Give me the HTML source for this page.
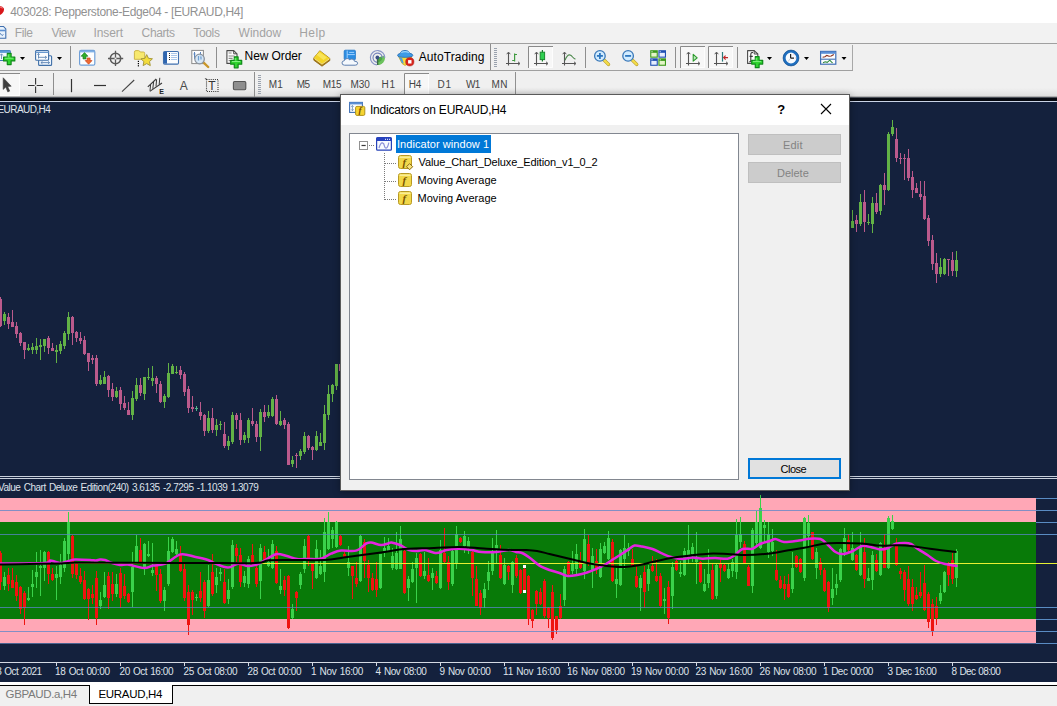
<!DOCTYPE html>
<html><head><meta charset="utf-8"><title>MT4</title><style>
html,body{margin:0;padding:0}
body{width:1057px;height:706px;overflow:hidden;position:relative;background:#f0f0f0;font-family:'Liberation Sans', sans-serif;}
.a{position:absolute}
.t{position:absolute;white-space:pre;}
svg{position:absolute;overflow:visible}
</style></head>
<body>
<div class="a" style="left:0px;top:0px;width:1057px;height:23px;background:#ffffff;"></div>
<div class="a" style="left:0px;top:23px;width:1057px;height:20px;background:#f2f2f2;"></div>
<div class="a" style="left:0px;top:43px;width:1057px;height:1px;background:#a0a0a0;"></div>
<div class="a" style="left:0px;top:44px;width:1057px;height:26px;background:#f0f0f0;"></div>
<div class="a" style="left:0px;top:70px;width:853px;height:1px;background:#a0a0a0;"></div>
<div class="a" style="left:0px;top:71px;width:1057px;height:27px;background:#f0f0f0;"></div>
<div class="a" style="left:0px;top:88px;width:1057px;height:9px;background:linear-gradient(#f0f0f0,#dcdcdc);"></div>
<div class="a" style="left:0px;top:96px;width:1057px;height:1px;background:#b0b0b0;"></div>
<div class="a" style="left:0px;top:97px;width:1057px;height:1px;background:#4a4f58;"></div>
<svg width="1057" height="100" style="left:0;top:0"><path d="M-3 6.2Q2.2 5 3.8 8.2Q4.6 11 2.4 13.2Q.6 15 -2 15.6Z" fill="#d8161a"/><path d="M-1 7.2Q1.6 6.6 2.6 8.4" stroke="#f08a8a" stroke-width="1.2" fill="none" opacity=".8"/><path d="M-2 26.5H3.5L5.8 29V38.3H-2Z" fill="#e8f2fc" stroke="#3f6fae" stroke-width="1.1"/><path d="M-1 30.5H5.5" stroke="#5c8fd0" stroke-width="1.6"/><path d="M-1 35.5l1.5-2 1.5 2 1.5-1" stroke="#3f6fae" stroke-width=".8" fill="none"/><rect x="-4" y="50.5" width="14.3" height="10" rx="1" fill="#f4f9ff" stroke="#3f78b4" stroke-width="1.1"/><rect x="-4" y="50.5" width="14.3" height="2.4" fill="#5c9ad8"/><path d="M1.5 54v5M0 55.5l1.5-1.7 1.5 1.7" stroke="#6d8fb5" stroke-width=".9" fill="none"/><path d="M7.30 53.40L11.10 53.40L11.10 57.10L14.80 57.10L14.80 60.90L11.10 60.90L11.10 64.60L7.30 64.60L7.30 60.90L3.60 60.90L3.60 57.10L7.30 57.10Z" fill="#2fd42f" stroke="#0f8a1a" stroke-width="1.2" stroke-linejoin="round"/><path d="M8.20 54.60V57.10M4.80 58.20H13.30" stroke="#8af58a" stroke-width="0.9" fill="none"/><path d="M20 57h5l-2.5 3z" fill="#000"/><rect x="38.6" y="55.8" width="13" height="9.6" rx="1" fill="#eef5fd" stroke="#3f6fa8" stroke-width="1.1"/><rect x="35.6" y="50.5" width="13" height="9.8" rx="1" fill="#fbfdff" stroke="#3f6fa8" stroke-width="1.1"/><path d="M35.6 52.3h13" stroke="#6a9ad0" stroke-width="1.4"/><path d="M38.5 53.5v5M37.3 54.7l1.2-1.3 1.2 1.3M38 57.3h8.5M45 56l1.6 1.3-1.6 1.3" stroke="#5f86b4" stroke-width=".9" fill="none"/><path d="M41 62.6h8.5M42.5 61.4l-1.6 1.2 1.6 1.2M48 61.4l1.6 1.2-1.6 1.2" stroke="#5f86b4" stroke-width=".9" fill="none"/><path d="M57 57h5l-2.5 3z" fill="#000"/><rect x="70" y="46" width="1" height="22" fill="#8e8e8e" shape-rendering="crispEdges"/><rect x="79.6" y="50.4" width="15.2" height="14.8" rx="1.5" fill="#fdfeff" stroke="#6f9fd8" stroke-width="1.2"/><path d="M80 51.6h14.4" stroke="#7fb0e6" stroke-width="1.6"/><path d="M84.5 52.6l3.4 3.6h-1.9v2.7h-3v-2.7h-1.9z" fill="#2fae2a" stroke="#1c7d1c" stroke-width=".7"/><path d="M88.6 64.2l-3.4-3.6h1.9v-2.6h3v2.6h1.9z" fill="#f06a30" stroke="#c8401a" stroke-width=".7"/><circle cx="115.5" cy="58.5" r="5.2" fill="none" stroke="#5a5a5a" stroke-width="1.5"/><path d="M115.5 50.8V66M108 58.5H123.2" stroke="#5a5a5a" stroke-width="1.3"/><circle cx="115.5" cy="58.5" r="1" fill="#f0f0f0"/><path d="M134.4 59.3V52.2q0-1.6 1.6-1.6h2.4q1.2 0 1.8 1.4h3.2q1.3 0 1.3 1.3V59.3z" fill="#f7e96e" stroke="#cdb64a" stroke-width="1"/><path d="M146.7 54.6l1.75 3.7 4 .5-2.95 2.8.8 4-3.6-2-3.6 2 .8-4-2.95-2.8 4-.5z" fill="#f3dc3c" stroke="#a89a3c" stroke-width="1" stroke-linejoin="round"/><rect x="137.8" y="60.8" width="1.2" height="1.2"/><rect x="137.8" y="63" width="1.2" height="1.2"/><rect x="137.8" y="65.2" width="1.2" height="1.2"/><rect x="163.5" y="51.5" width="15" height="12.6" rx="1.2" fill="#fdfeff" stroke="#3f6fae" stroke-width="1.1"/><rect x="164" y="52" width="3" height="11.6" fill="#2f66b0"/><rect x="169" y="53" width="1" height="1" fill="#222" shape-rendering="crispEdges"/><rect x="171" y="53" width="6" height="1" fill="#a9c6ea" shape-rendering="crispEdges"/><rect x="169" y="55" width="1" height="1" fill="#222" shape-rendering="crispEdges"/><rect x="171" y="55" width="6" height="1" fill="#a9c6ea" shape-rendering="crispEdges"/><rect x="169" y="57" width="1" height="1" fill="#222" shape-rendering="crispEdges"/><rect x="171" y="57" width="6" height="1" fill="#a9c6ea" shape-rendering="crispEdges"/><rect x="169" y="59" width="1" height="1" fill="#222" shape-rendering="crispEdges"/><rect x="171" y="59" width="6" height="1" fill="#a9c6ea" shape-rendering="crispEdges"/><rect x="191.8" y="50.4" width="11.6" height="13.2" fill="#fdfdfd" stroke="#8a8a8a" stroke-width="1"/><path d="M194.5 52v7M200.5 52v6M193.5 54h2M199.5 55h2.5" stroke="#5a86c0" stroke-width="1"/><path d="M203.6 62.6l4.6 4.4" stroke="#c9962a" stroke-width="2.4" stroke-linecap="round"/><circle cx="199.6" cy="59" r="4.8" fill="#cfe3f6" fill-opacity=".85" stroke="#8c949e" stroke-width="1.2"/><path d="M198.5 56v4.5M201 56.5v3" stroke="#6f9fd0" stroke-width="1.2"/><rect x="216" y="47" width="1" height="21" fill="#8e8e8e" shape-rendering="crispEdges"/><path d="M226.9 50.6h6.8l3.3 3.2v9.6h-10.1z" fill="#fdfdfd" stroke="#4a4a4a" stroke-width="1.1" stroke-linejoin="round"/><path d="M233.7 50.6v3.2h3.3" fill="none" stroke="#4a4a4a" stroke-width="1"/><path d="M228.6 53h3M228.6 56h6M228.6 58.4h4M228.6 60.6h3" stroke="#8a8a8a" stroke-width="1.1"/><path d="M234.30 56.80L238.10 56.80L238.10 60.40L241.70 60.40L241.70 64.20L238.10 64.20L238.10 67.80L234.30 67.80L234.30 64.20L230.70 64.20L230.70 60.40L234.30 60.40Z" fill="#2fd42f" stroke="#0f8a1a" stroke-width="1.2" stroke-linejoin="round"/><path d="M235.20 58.00V60.40M231.90 61.50H240.20" stroke="#8af58a" stroke-width="0.9" fill="none"/><path d="M319.8 50.8L329.8 58.4V60.6L322 66.2L313.8 60.2V58z" fill="#a87c14" stroke="#8a6410" stroke-width=".8" stroke-linejoin="round"/><path d="M319.8 50.8L329.8 58.4L322 64L313.8 58z" fill="#f3d428"/><path d="M319.6 52.2L326.8 57.6L323.6 60L316.4 54.8z" fill="#fbea6a" opacity=".75"/><path d="M314.4 58.6L322 64.2L329.4 58.9" stroke="#fff3a0" stroke-width=".8" fill="none"/><rect x="344.2" y="50.2" width="11.2" height="9.6" rx="1" fill="#2b8de2" stroke="#1c74c8" stroke-width=".8"/><path d="M347.2 50.6v8.6M347.2 54.6h7.6M349.2 52.4h5" stroke="#9fd0ff" stroke-width="1"/><path d="M344.6 65.2q-2.6 0-2.6-2.3 0-2 2.3-2.2.6-2.2 2.9-2.2 1.7 0 2.5 1.4.9-.9 2.2-.9 2.2 0 2.5 2.2 3.2-.1 3.2 2 0 2-2.4 2z" fill="#f4f8fd" stroke="#5e7fae" stroke-width="1"/><path d="M377.6 57.7L384.7 55.6A7.4 7.4 0 0 1 377.2 65.1Z" fill="#6cc25e"/><path d="M377.6 57.7L382 56.4A4.6 4.6 0 0 1 377.3 62.3Z" fill="#4ea646"/><circle cx="377.6" cy="57.7" r="7.2" fill="none" stroke="#8a96c8" stroke-width="1.2" stroke-dasharray="33 12.3" transform="rotate(95 377.6 57.7)"/><circle cx="377.6" cy="57.7" r="4.6" fill="none" stroke="#7684bc" stroke-width="1.2" stroke-dasharray="21 8" transform="rotate(95 377.6 57.7)"/><path d="M377.5 57.7l.2 7.2" stroke="#3f6a4a" stroke-width="1.4"/><circle cx="377.4" cy="57.5" r="1.9" fill="#3a4f86"/><path d="M398.6 56.6h13l-2 6.4-4.6 2.4-3-2z" fill="#f7dc3c" stroke="#caa422" stroke-width=".8" stroke-linejoin="round"/><path d="M398.8 56.8l3.4 1.4 1.6 5.6-2-1z" fill="#4aa0e0"/><path d="M397.6 55.6q-.2-1.6 2.6-2.2.6-3 4.8-3 3.8 0 4.6 2.8 3.2.6 3.2 2.2 0 1.9-7.6 1.9t-7.6-1.7z" fill="#3d9be6" stroke="#2a6fb6" stroke-width=".9"/><path d="M401.2 52.6q3.6-1.8 7.8-.2" stroke="#9ad6ff" stroke-width="1.1" fill="none"/><circle cx="409.8" cy="61.8" r="4.1" fill="#d8241c" stroke="#b01810" stroke-width=".6"/><rect x="408.1" y="60.1" width="3.4" height="3.4" fill="#fff"/><rect x="490" y="44" width="1" height="26" fill="#8e8e8e" shape-rendering="crispEdges"/><rect x="494" y="48" width="3" height="1" fill="#9aa2ae" shape-rendering="crispEdges"/><rect x="494" y="50" width="3" height="1" fill="#9aa2ae" shape-rendering="crispEdges"/><rect x="494" y="52" width="3" height="1" fill="#9aa2ae" shape-rendering="crispEdges"/><rect x="494" y="54" width="3" height="1" fill="#9aa2ae" shape-rendering="crispEdges"/><rect x="494" y="56" width="3" height="1" fill="#9aa2ae" shape-rendering="crispEdges"/><rect x="494" y="58" width="3" height="1" fill="#9aa2ae" shape-rendering="crispEdges"/><rect x="494" y="60" width="3" height="1" fill="#9aa2ae" shape-rendering="crispEdges"/><rect x="494" y="62" width="3" height="1" fill="#9aa2ae" shape-rendering="crispEdges"/><rect x="494" y="64" width="3" height="1" fill="#9aa2ae" shape-rendering="crispEdges"/><rect x="494" y="66" width="3" height="1" fill="#9aa2ae" shape-rendering="crispEdges"/><path d="M508.5 52.4V65.5M506.0 63.5H519.5" stroke="#555" stroke-width="1.1" fill="none"/><path d="M506.7 54.199999999999996L508.5 52.1L510.3 54.199999999999996M518.0 61.8L520.0 63.5L518.0 65.2" stroke="#555" stroke-width="1" fill="none"/><path d="M514.6 53.6V61.4M514.6 54.5H517M512.2 60.5H514.6" stroke="#3f9a3f" stroke-width="1.2" fill="none"/><rect x="528" y="46" width="25" height="22" fill="#f7f7f7"/><path d="M528.5 68V46.5H553" stroke="#8a8a8a" stroke-width="1" fill="none"/><path d="M552.5 47V67.5H529" stroke="#fdfdfd" stroke-width="1" fill="none"/><path d="M536.5 52.4V65.5M534.0 63.5H547.5" stroke="#555" stroke-width="1.1" fill="none"/><path d="M534.7 54.199999999999996L536.5 52.1L538.3 54.199999999999996M546.0 61.8L548.0 63.5L546.0 65.2" stroke="#555" stroke-width="1" fill="none"/><path d="M542.4 50v11.6" stroke="#1c7d2c" stroke-width="1.2"/><rect x="540.2" y="52.2" width="4.4" height="7.4" fill="#2fd050" stroke="#1c8a30" stroke-width="1"/><path d="M564.5 52.4V65.5M562.0 63.5H575.5" stroke="#555" stroke-width="1.1" fill="none"/><path d="M562.7 54.199999999999996L564.5 52.1L566.3 54.199999999999996M574.0 61.8L576.0 63.5L574.0 65.2" stroke="#555" stroke-width="1" fill="none"/><path d="M565 60.2q2.2-5.6 4.6-5.4 1.6.2 3 2.2 1.4 1.8 2.8 2.2" stroke="#4f8a4f" stroke-width="1.2" fill="none"/><rect x="585" y="47" width="1" height="21" fill="#8e8e8e" shape-rendering="crispEdges"/><path d="M603.9 59.9l4.6 4.5" stroke="#b09428" stroke-width="3.4" stroke-linecap="round"/><path d="M603.9 59.9l4.6 4.5" stroke="#f2dc4a" stroke-width="2.2" stroke-linecap="round"/><circle cx="599.9" cy="55.9" r="5.3" fill="#d2ecff" stroke="#3a78b8" stroke-width="1.3"/><path d="M596.9 55.9h6" stroke="#2f78c0" stroke-width="1.8"/><path d="M599.9 52.9v6" stroke="#2f78c0" stroke-width="1.8"/><path d="M632.1 59.9l4.6 4.5" stroke="#b09428" stroke-width="3.4" stroke-linecap="round"/><path d="M632.1 59.9l4.6 4.5" stroke="#f2dc4a" stroke-width="2.2" stroke-linecap="round"/><circle cx="628.1" cy="55.9" r="5.3" fill="#d2ecff" stroke="#3a78b8" stroke-width="1.3"/><path d="M625.1 55.9h6" stroke="#2f78c0" stroke-width="1.8"/><rect x="650.2" y="50.2" width="7.6" height="7.5" fill="#3c9a1c"/><rect x="651.3000000000001" y="52.800000000000004" width="5.4" height="3.8" fill="#e4f5c8"/><rect x="651.4000000000001" y="51.2" width="1.2" height="1" fill="#fff" opacity=".8"/><rect x="658.4" y="50.2" width="7.6" height="7.5" fill="#1f50b4"/><rect x="659.5" y="52.800000000000004" width="5.4" height="3.8" fill="#e6eeff"/><rect x="659.6" y="51.2" width="1.2" height="1" fill="#fff" opacity=".8"/><rect x="650.2" y="58.3" width="7.6" height="7.5" fill="#1f50b4"/><rect x="651.3000000000001" y="60.9" width="5.4" height="3.8" fill="#e6eeff"/><rect x="651.4000000000001" y="59.3" width="1.2" height="1" fill="#fff" opacity=".8"/><rect x="658.4" y="58.3" width="7.6" height="7.5" fill="#3c9a1c"/><rect x="659.5" y="60.9" width="5.4" height="3.8" fill="#e4f5c8"/><rect x="659.6" y="59.3" width="1.2" height="1" fill="#fff" opacity=".8"/><rect x="675" y="47" width="1" height="21" fill="#8e8e8e" shape-rendering="crispEdges"/><rect x="680" y="46" width="25" height="22" fill="#f7f7f7"/><path d="M680.5 68V46.5H705" stroke="#8a8a8a" stroke-width="1" fill="none"/><path d="M704.5 47V67.5H681" stroke="#fdfdfd" stroke-width="1" fill="none"/><path d="M688.5 52.4V65.5M686.0 63.5H699.5" stroke="#555" stroke-width="1.1" fill="none"/><path d="M686.7 54.199999999999996L688.5 52.1L690.3 54.199999999999996M698.0 61.8L700.0 63.5L698.0 65.2" stroke="#555" stroke-width="1" fill="none"/><path d="M693.2 54.4v6.8l4-3.4z" fill="#bfe8bf" stroke="#2a9a2a" stroke-width="1.1" stroke-linejoin="round"/><rect x="708" y="46" width="25" height="22" fill="#f7f7f7"/><path d="M708.5 68V46.5H733" stroke="#8a8a8a" stroke-width="1" fill="none"/><path d="M732.5 47V67.5H709" stroke="#fdfdfd" stroke-width="1" fill="none"/><path d="M716.5 52.4V65.5M714.0 63.5H727.5" stroke="#555" stroke-width="1.1" fill="none"/><path d="M714.7 54.199999999999996L716.5 52.1L718.3 54.199999999999996M726.0 61.8L728.0 63.5L726.0 65.2" stroke="#555" stroke-width="1" fill="none"/><path d="M722.5 52v9.6" stroke="#2a7a7a" stroke-width="1.2"/><path d="M728 57.6h-4M725.6 55.6l-2 2 2 2" stroke="#c02828" stroke-width="1.1" fill="none"/><rect x="737" y="47" width="1" height="21" fill="#8e8e8e" shape-rendering="crispEdges"/><path d="M747.6 50.6h6.6l3.6 3.4v9.4h-10.2z" fill="#fdfdfd" stroke="#4a4a4a" stroke-width="1.1" stroke-linejoin="round"/><path d="M754.2 50.6v3.4h3.6" fill="none" stroke="#4a4a4a" stroke-width="1"/><path d="M753 52.6q-2-.6-2.2 1.6v6.2q0 1.6-1.6 1.4M749.6 56.4h3.2" stroke="#3a3a3a" stroke-width="1.1" fill="none"/><path d="M755.30 56.70L759.10 56.70L759.10 60.30L762.70 60.30L762.70 64.10L759.10 64.10L759.10 67.70L755.30 67.70L755.30 64.10L751.70 64.10L751.70 60.30L755.30 60.30Z" fill="#2fd42f" stroke="#0f8a1a" stroke-width="1.2" stroke-linejoin="round"/><path d="M756.20 57.90V60.30M752.90 61.40H761.20" stroke="#8af58a" stroke-width="0.9" fill="none"/><path d="M767 57h5l-2.5 3z" fill="#000"/><circle cx="791" cy="58" r="6.7" fill="#f7fbff" stroke="#1f6fc0" stroke-width="2.6"/><circle cx="791" cy="58" r="7.9" fill="none" stroke="#15508e" stroke-width=".7"/><path d="M790.6 54v4.2h3.4" stroke="#222" stroke-width="1.2" fill="none"/><path d="M790.6 58.2l-2.6 3.4" stroke="#c8c8c8" stroke-width=".9"/><path d="M793.4 55.2l1-1M795 58h.8" stroke="#e09a9a" stroke-width=".8"/><path d="M804 57h5l-2.5 3z" fill="#000"/><rect x="820.6" y="51.4" width="15.2" height="12.8" fill="#fdfeff" stroke="#3f6fb4" stroke-width="1.2"/><rect x="821" y="51.6" width="14.4" height="2.2" fill="#5a8fd6"/><path d="M821 59.2h14.4" stroke="#3f6fb4" stroke-width="1.1"/><path d="M822.6 57.2l2.4-.4 1.8-1.4 2.2.8 2.2-.2 2.6-1.4" stroke="#8a2f1c" stroke-width="1.1" fill="none"/><path d="M823 62.8l2.2-1 2 .6 2.6-2.2 2 2.2 1 .4" stroke="#2f8a3c" stroke-width="1.1" fill="none"/><path d="M841.5 57h5l-2.5 3z" fill="#000"/><rect x="852" y="45" width="1" height="25" fill="#a8a8a8" shape-rendering="crispEdges"/><rect x="-1" y="73" width="21" height="23" fill="#f7f7f7"/><path d="M-0.5 96V73.5H20" stroke="#8a8a8a" stroke-width="1" fill="none"/><path d="M19.5 74V95.5H0" stroke="#fdfdfd" stroke-width="1" fill="none"/><path d="M3.2 77.8V89.4l2.6-2.3 2 4.8 1.9-.8-2-4.6 3.5-.3z" fill="#3f3f3f" stroke="#3f3f3f" stroke-width=".6" stroke-linejoin="round"/><path d="M35.6 78V84.5M35.6 86.6V93M28 85.5H34.6M36.7 85.5H43" stroke="#333" stroke-width="1.1"/><rect x="53" y="73" width="1" height="22" fill="#8e8e8e" shape-rendering="crispEdges"/><path d="M71.5 79V92.2" stroke="#333" stroke-width="1.2"/><path d="M94 85.5H106" stroke="#333" stroke-width="1.2"/><path d="M122 91.6L134.2 80" stroke="#444" stroke-width="1.1"/><path d="M147.8 86.8L156.2 79M149.8 91.4L162 83" stroke="#3a3a3a" stroke-width="1.1"/><path d="M150.6 84.4l-.6 6.4M153.6 81.8l-.8 7M156.6 79.4l-.6 7M159.8 77.8l-.6 6.6" stroke="#3a3a3a" stroke-width="1"/><rect x="206.5" y="79.5" width="11.5" height="12" fill="none" stroke="#333" stroke-width="1.1" stroke-dasharray="1 1.1"/><path d="M204.6 78.2l2.2.2-1 1.2z" fill="#333"/><rect x="233.4" y="81.5" width="12.4" height="8.2" rx="1.2" fill="#8f8f8f" stroke="#555" stroke-width="1.1"/><rect x="254" y="72" width="1" height="25" fill="#8e8e8e" shape-rendering="crispEdges"/><rect x="258" y="75" width="3" height="1" fill="#9aa2ae" shape-rendering="crispEdges"/><rect x="258" y="77" width="3" height="1" fill="#9aa2ae" shape-rendering="crispEdges"/><rect x="258" y="79" width="3" height="1" fill="#9aa2ae" shape-rendering="crispEdges"/><rect x="258" y="81" width="3" height="1" fill="#9aa2ae" shape-rendering="crispEdges"/><rect x="258" y="83" width="3" height="1" fill="#9aa2ae" shape-rendering="crispEdges"/><rect x="258" y="85" width="3" height="1" fill="#9aa2ae" shape-rendering="crispEdges"/><rect x="258" y="87" width="3" height="1" fill="#9aa2ae" shape-rendering="crispEdges"/><rect x="258" y="89" width="3" height="1" fill="#9aa2ae" shape-rendering="crispEdges"/><rect x="258" y="91" width="3" height="1" fill="#9aa2ae" shape-rendering="crispEdges"/><rect x="258" y="93" width="3" height="1" fill="#9aa2ae" shape-rendering="crispEdges"/><rect x="404" y="73" width="25" height="23" fill="#f7f7f7"/><path d="M404.5 96V73.5H429" stroke="#8a8a8a" stroke-width="1" fill="none"/><path d="M428.5 74V95.5H405" stroke="#fdfdfd" stroke-width="1" fill="none"/><rect x="515" y="72" width="1" height="25" fill="#909090" shape-rendering="crispEdges"/></svg>
<div class="a" style="left:0px;top:98px;width:1057px;height:3px;background:#05080f;"></div>
<div class="a" style="left:0px;top:101px;width:1057px;height:1px;background:#c9d3e6;"></div>
<div class="a" style="left:0px;top:102px;width:1057px;height:580px;background:#14213d;"></div>
<div class="a" style="left:0px;top:476px;width:1057px;height:1px;background:#c9d0dc;"></div>
<div class="a" style="left:0px;top:478px;width:1057px;height:1px;background:#c9d0dc;"></div>
<svg width="1057" height="706" style="left:0;top:0" shape-rendering="crispEdges"><path fill="#bb5a8c" d="M0 297h1v30h-1zM-1 299h3v27h-3zM8 313h1v16h-1zM7 317h3v7h-3zM12 310h1v17h-1zM11 322h3v5h-3zM16 322h1v16h-1zM15 326h3v8h-3zM20 332h1v14h-1zM19 333h3v10h-3zM24 342h1v17h-1zM23 342h3v8h-3zM48 336h1v18h-1zM47 338h3v10h-3zM52 343h1v8h-1zM51 348h3v3h-3zM72 316h1v29h-1zM71 317h3v16h-3zM76 331h1v11h-1zM75 332h3v6h-3zM80 332h1v12h-1zM79 338h3v3h-3zM84 336h1v19h-1zM83 340h3v14h-3zM88 353h1v18h-1zM87 353h3v9h-3zM92 355h1v9h-1zM91 358h3v2h-3zM96 355h1v31h-1zM95 358h3v26h-3zM108 375h1v22h-1zM107 376h3v14h-3zM112 383h1v18h-1zM111 389h3v8h-3zM120 387h1v23h-1zM119 390h3v14h-3zM124 396h1v14h-1zM123 403h3v5h-3zM128 402h1v13h-1zM127 410h3v5h-3zM140 378h1v18h-1zM139 385h3v8h-3zM156 376h1v17h-1zM155 378h3v6h-3zM160 381h1v22h-1zM159 384h3v18h-3zM180 366h1v13h-1zM179 370h3v5h-3zM184 372h1v24h-1zM183 374h3v18h-3zM188 386h1v27h-1zM187 389h3v19h-3zM192 396h1v16h-1zM191 407h3v2h-3zM200 402h1v18h-1zM199 412h3v4h-3zM204 414h1v22h-1zM203 415h3v16h-3zM212 408h1v25h-1zM211 418h3v12h-3zM224 422h1v26h-1zM223 434h3v12h-3zM236 413h1v16h-1zM235 415h3v5h-3zM240 413h1v32h-1zM239 420h3v20h-3zM252 408h1v18h-1zM251 421h3v3h-3zM256 421h1v21h-1zM255 424h3v13h-3zM264 405h1v17h-1zM263 412h3v5h-3zM276 395h1v30h-1zM275 399h3v25h-3zM284 418h1v11h-1zM283 420h3v5h-3zM288 422h1v43h-1zM287 424h3v41h-3zM296 453h1v15h-1zM295 455h3v1h-3zM308 435h1v15h-1zM307 436h3v12h-3zM312 446h1v14h-1zM311 447h3v3h-3zM340 363h1v9h-1zM339 364h3v7h-3zM856 215h1v17h-1zM855 220h3v4h-3zM864 190h1v42h-1zM863 202h3v20h-3zM876 193h1v21h-1zM875 203h3v9h-3zM884 173h1v32h-1zM883 185h3v5h-3zM896 128h1v34h-1zM895 139h3v19h-3zM900 153h1v11h-1zM899 158h3v1h-3zM904 154h1v26h-1zM903 158h3v1h-3zM908 149h1v32h-1zM907 158h3v20h-3zM912 171h1v27h-1zM911 177h3v13h-3zM916 183h1v10h-1zM915 188h3v5h-3zM920 181h1v19h-1zM919 194h3v3h-3zM924 181h1v39h-1zM923 196h3v23h-3zM928 215h1v31h-1zM927 218h3v23h-3zM932 235h1v35h-1zM931 240h3v24h-3zM936 253h1v30h-1zM935 263h3v11h-3zM948 259h1v17h-1zM947 259h3v1h-3zM952 252h1v24h-1zM951 260h3v11h-3z"/><path fill="#62b246" d="M4 312h1v13h-1zM3 314h3v7h-3zM28 344h1v7h-1zM27 348h3v2h-3zM32 343h1v11h-1zM31 347h3v3h-3zM36 338h1v16h-1zM35 346h3v4h-3zM40 339h1v21h-1zM39 345h3v2h-3zM44 339h1v13h-1zM43 339h3v7h-3zM56 345h1v18h-1zM55 350h3v2h-3zM60 341h1v13h-1zM59 344h3v7h-3zM64 331h1v18h-1zM63 333h3v13h-3zM68 312h1v28h-1zM67 317h3v17h-3zM100 375h1v10h-1zM99 380h3v4h-3zM104 371h1v13h-1zM103 377h3v7h-3zM116 387h1v11h-1zM115 391h3v6h-3zM132 391h1v29h-1zM131 398h3v17h-3zM136 378h1v23h-1zM135 385h3v14h-3zM144 377h1v23h-1zM143 377h3v17h-3zM148 368h1v12h-1zM147 377h3v1h-3zM152 366h1v20h-1zM151 378h3v3h-3zM164 394h1v14h-1zM163 396h3v6h-3zM168 363h1v35h-1zM167 373h3v24h-3zM172 364h1v10h-1zM171 366h3v8h-3zM176 366h1v8h-1zM175 372h3v1h-3zM208 411h1v22h-1zM207 418h3v13h-3zM216 419h1v17h-1zM215 425h3v5h-3zM220 421h1v9h-1zM219 424h3v1h-3zM228 436h1v14h-1zM227 441h3v5h-3zM232 412h1v32h-1zM231 415h3v27h-3zM244 432h1v11h-1zM243 435h3v5h-3zM248 418h1v25h-1zM247 420h3v18h-3zM260 409h1v42h-1zM259 412h3v25h-3zM268 405h1v13h-1zM267 412h3v4h-3zM272 397h1v20h-1zM271 399h3v17h-3zM280 411h1v15h-1zM279 421h3v4h-3zM292 456h1v11h-1zM291 460h3v4h-3zM300 449h1v11h-1zM299 451h3v5h-3zM304 432h1v22h-1zM303 436h3v16h-3zM316 431h1v20h-1zM315 436h3v14h-3zM320 433h1v13h-1zM319 442h3v4h-3zM324 405h1v45h-1zM323 414h3v29h-3zM328 385h1v35h-1zM327 394h3v21h-3zM332 384h1v18h-1zM331 385h3v9h-3zM336 364h1v26h-1zM335 364h3v22h-3zM852 210h1v18h-1zM851 221h3v7h-3zM860 194h1v32h-1zM859 202h3v22h-3zM868 214h1v11h-1zM867 222h3v1h-3zM872 197h1v36h-1zM871 203h3v21h-3zM880 184h1v31h-1zM879 185h3v26h-3zM888 132h1v59h-1zM887 134h3v56h-3zM892 120h1v16h-1zM891 127h3v7h-3zM940 258h1v19h-1zM939 267h3v7h-3zM944 258h1v17h-1zM943 259h3v15h-3zM956 251h1v26h-1zM955 260h3v11h-3z"/><path fill="#4fb58c" d="M196 406h1v5h-1zM195 408h3v1h-3z"/></svg>
<div class="a" style="left:0px;top:498px;width:1036px;height:24px;background:#ffa7b6;"></div>
<div class="a" style="left:0px;top:522px;width:1036px;height:97px;background:#087a08;"></div>
<div class="a" style="left:0px;top:619px;width:1036px;height:24px;background:#ffa7b6;"></div>
<svg width="1057" height="706" style="left:0;top:0"><g shape-rendering="crispEdges"><path fill="#ee1410" d="M0 551h1v39h-1zM-1 553h3v29h-3zM8 568h1v23h-1zM7 575h3v9h-3zM12 568h1v20h-1zM11 580h3v8h-3zM16 575h1v26h-1zM15 582h3v14h-3zM20 586h1v28h-1zM19 587h3v22h-3zM24 591h1v34h-1zM23 593h3v15h-3zM48 551h1v33h-1zM47 552h3v22h-3zM52 568h1v13h-1zM51 574h3v6h-3zM72 535h1v43h-1zM71 536h3v38h-3zM76 562h1v17h-1zM75 564h3v11h-3zM80 568h1v16h-1zM79 576h3v6h-3zM84 571h1v29h-1zM83 580h3v19h-3zM88 588h1v32h-1zM87 589h3v10h-3zM92 585h1v19h-1zM91 594h3v4h-3zM96 571h1v54h-1zM95 578h3v40h-3zM108 572h1v37h-1zM107 576h3v22h-3zM112 572h1v29h-1zM111 584h3v10h-3zM120 568h1v40h-1zM119 573h3v25h-3zM124 574h1v25h-1zM123 586h3v10h-3zM128 593h1v10h-1zM127 594h3v8h-3zM140 538h1v26h-1zM139 550h3v12h-3zM156 565h1v26h-1zM155 566h3v9h-3zM160 569h1v34h-1zM159 574h3v27h-3zM180 546h1v26h-1zM179 554h3v17h-3zM184 564h1v37h-1zM183 569h3v29h-3zM188 585h1v50h-1zM187 592h3v33h-3zM192 590h1v25h-1zM191 592h3v8h-3zM200 572h1v30h-1zM199 591h3v7h-3zM204 580h1v38h-1zM203 582h3v29h-3zM212 554h1v42h-1zM211 572h3v22h-3zM224 569h1v35h-1zM223 582h3v21h-3zM236 544h1v18h-1zM235 548h3v8h-3zM240 548h1v39h-1zM239 555h3v27h-3zM252 544h1v21h-1zM251 555h3v8h-3zM256 564h1v23h-1zM255 568h3v16h-3zM264 546h1v16h-1zM263 552h3v8h-3zM276 546h1v38h-1zM275 551h3v32h-3zM284 576h1v20h-1zM283 580h3v10h-3zM288 575h1v54h-1zM287 576h3v52h-3zM296 591h1v20h-1zM295 592h3v6h-3zM308 535h1v31h-1zM307 536h3v22h-3zM312 564h1v25h-1zM311 564h3v7h-3zM340 535h1v11h-1zM339 536h3v9h-3zM344 552h1v6h-1zM343 554h3v3h-3zM352 566h1v33h-1zM351 566h3v10h-3zM356 562h1v25h-1zM355 578h3v6h-3zM364 539h1v39h-1zM363 542h3v19h-3zM368 560h1v32h-1zM367 565h3v13h-3zM372 573h1v18h-1zM371 578h3v12h-3zM376 562h1v35h-1zM375 579h3v11h-3zM404 550h1v44h-1zM403 551h3v42h-3zM420 553h1v24h-1zM419 554h3v22h-3zM428 558h1v24h-1zM427 575h3v6h-3zM436 571h1v13h-1zM435 576h3v7h-3zM444 528h1v35h-1zM443 553h3v9h-3zM448 556h1v34h-1zM447 562h3v20h-3zM460 537h1v6h-1zM459 538h3v4h-3zM472 551h1v45h-1zM471 552h3v26h-3zM476 566h1v40h-1zM475 579h3v27h-3zM480 590h1v25h-1zM479 593h3v15h-3zM500 545h1v34h-1zM499 555h3v23h-3zM508 565h1v15h-1zM507 566h3v6h-3zM516 555h1v23h-1zM515 558h3v18h-3zM520 569h1v25h-1zM519 570h3v23h-3zM524 568h1v24h-1zM523 569h3v22h-3zM528 575h1v50h-1zM527 576h3v43h-3zM532 609h1v19h-1zM531 610h3v11h-3zM536 590h1v25h-1zM535 591h3v13h-3zM540 588h1v17h-1zM539 592h3v12h-3zM544 579h1v39h-1zM543 581h3v35h-3zM548 607h1v21h-1zM547 608h3v10h-3zM552 585h1v55h-1zM551 592h3v46h-3zM556 616h1v18h-1zM555 616h3v14h-3zM560 594h1v25h-1zM559 606h3v12h-3zM568 561h1v14h-1zM567 562h3v12h-3zM580 552h1v17h-1zM579 562h3v6h-3zM588 535h1v31h-1zM587 544h3v19h-3zM596 549h1v25h-1zM595 561h3v9h-3zM612 539h1v43h-1zM611 542h3v39h-3zM632 549h1v18h-1zM631 559h3v7h-3zM636 565h1v23h-1zM635 576h3v11h-3zM644 566h1v42h-1zM643 572h3v20h-3zM652 556h1v16h-1zM651 566h3v5h-3zM656 559h1v23h-1zM655 576h3v5h-3zM660 573h1v35h-1zM659 576h3v30h-3zM668 581h1v43h-1zM667 587h3v31h-3zM676 560h1v11h-1zM675 561h3v9h-3zM700 561h1v22h-1zM699 562h3v20h-3zM712 563h1v37h-1zM711 570h3v29h-3zM720 559h1v23h-1zM719 563h3v5h-3zM724 564h1v8h-1zM723 565h3v6h-3zM744 541h1v23h-1zM743 544h3v19h-3zM748 565h1v21h-1zM747 567h3v19h-3zM776 550h1v31h-1zM775 570h3v10h-3zM780 576h1v13h-1zM779 580h3v8h-3zM784 576h1v24h-1zM783 584h3v5h-3zM788 574h1v24h-1zM787 584h3v13h-3zM796 555h1v13h-1zM795 556h3v11h-3zM800 558h1v15h-1zM799 559h3v13h-3zM812 532h1v28h-1zM811 532h3v27h-3zM820 558h1v17h-1zM819 562h3v8h-3zM824 568h1v24h-1zM823 570h3v21h-3zM828 581h1v31h-1zM827 582h3v26h-3zM848 534h1v18h-1zM847 540h3v10h-3zM856 554h1v17h-1zM855 555h3v15h-3zM864 538h1v50h-1zM863 552h3v27h-3zM876 554h1v18h-1zM875 560h3v11h-3zM884 534h1v34h-1zM883 548h3v20h-3zM896 538h1v28h-1zM895 544h3v21h-3zM900 568h1v11h-1zM899 571h3v3h-3zM904 570h1v31h-1zM903 572h3v18h-3zM908 566h1v40h-1zM907 579h3v25h-3zM912 579h1v32h-1zM911 587h3v17h-3zM916 587h1v13h-1zM915 595h3v4h-3zM920 572h1v26h-1zM919 592h3v4h-3zM924 565h1v46h-1zM923 583h3v27h-3zM928 592h1v36h-1zM927 594h3v28h-3zM932 599h1v37h-1zM931 604h3v27h-3zM936 597h1v28h-1zM935 606h3v12h-3zM948 562h1v24h-1zM947 563h3v12h-3zM952 553h1v31h-1zM951 560h3v19h-3z"/><path fill="#3ad24a" d="M4 572h1v18h-1zM3 577h3v9h-3zM28 587h1v14h-1zM27 598h3v2h-3zM32 570h1v27h-1zM31 584h3v3h-3zM36 552h1v36h-1zM35 572h3v5h-3zM40 550h1v46h-1zM39 566h3v2h-3zM44 551h1v30h-1zM43 552h3v16h-3zM56 566h1v34h-1zM55 574h3v4h-3zM60 554h1v30h-1zM59 565h3v12h-3zM64 538h1v34h-1zM63 541h3v27h-3zM68 512h1v48h-1zM67 522h3v32h-3zM100 592h1v17h-1zM99 600h3v6h-3zM104 572h1v26h-1zM103 585h3v12h-3zM116 574h1v23h-1zM115 584h3v10h-3zM132 552h1v55h-1zM131 567h3v25h-3zM136 535h1v29h-1zM135 546h3v16h-3zM144 543h1v32h-1zM143 544h3v25h-3zM148 541h1v16h-1zM147 554h3v2h-3zM152 543h1v33h-1zM151 570h3v3h-3zM164 587h1v24h-1zM163 590h3v11h-3zM168 537h1v49h-1zM167 551h3v33h-3zM172 537h1v16h-1zM171 539h3v13h-3zM176 541h1v14h-1zM175 549h3v5h-3zM196 594h1v7h-1zM195 597h3v1h-3zM208 565h1v42h-1zM207 580h3v26h-3zM216 568h1v25h-1zM215 577h3v8h-3zM220 568h1v13h-1zM219 572h3v2h-3zM228 579h1v25h-1zM227 590h3v9h-3zM232 540h1v49h-1zM231 545h3v42h-3zM244 571h1v16h-1zM243 576h3v7h-3zM248 556h1v32h-1zM247 559h3v25h-3zM260 544h1v55h-1zM259 548h3v33h-3zM268 549h1v18h-1zM267 562h3v4h-3zM272 540h1v29h-1zM271 544h3v24h-3zM280 569h1v25h-1zM279 586h3v4h-3zM292 604h1v15h-1zM291 609h3v9h-3zM300 572h1v17h-1zM299 574h3v11h-3zM304 539h1v34h-1zM303 546h3v23h-3zM316 540h1v39h-1zM315 549h3v29h-3zM320 550h1v25h-1zM319 566h3v8h-3zM324 518h1v64h-1zM323 532h3v40h-3zM328 512h1v38h-1zM327 522h3v27h-3zM332 527h1v21h-1zM331 530h3v9h-3zM336 521h1v27h-1zM335 522h3v25h-3zM348 546h1v30h-1zM347 562h3v6h-3zM360 535h1v47h-1zM359 536h3v45h-3zM380 554h1v35h-1zM379 554h3v34h-3zM384 537h1v20h-1zM383 548h3v3h-3zM388 538h1v14h-1zM387 546h3v5h-3zM392 548h1v22h-1zM391 556h3v12h-3zM396 532h1v38h-1zM395 553h3v16h-3zM400 526h1v43h-1zM399 539h3v30h-3zM408 576h1v25h-1zM407 579h3v9h-3zM412 562h1v21h-1zM411 569h3v13h-3zM416 553h1v50h-1zM415 558h3v10h-3zM424 552h1v27h-1zM423 571h3v5h-3zM432 568h1v22h-1zM431 573h3v5h-3zM440 540h1v49h-1zM439 550h3v38h-3zM452 550h1v36h-1zM451 551h3v33h-3zM456 526h1v43h-1zM455 534h3v29h-3zM464 531h1v22h-1zM463 536h3v10h-3zM468 537h1v17h-1zM467 541h3v6h-3zM484 583h1v25h-1zM483 589h3v9h-3zM488 561h1v29h-1zM487 572h3v9h-3zM492 538h1v37h-1zM491 553h3v18h-3zM496 530h1v33h-1zM495 545h3v5h-3zM504 558h1v27h-1zM503 565h3v19h-3zM512 561h1v32h-1zM511 562h3v23h-3zM564 566h1v40h-1zM563 569h3v31h-3zM572 551h1v23h-1zM571 564h3v7h-3zM576 544h1v30h-1zM575 554h3v15h-3zM584 529h1v50h-1zM583 539h3v32h-3zM592 548h1v40h-1zM591 556h3v14h-3zM600 543h1v35h-1zM599 549h3v28h-3zM604 542h1v12h-1zM603 546h3v7h-3zM608 531h1v29h-1zM607 538h3v21h-3zM616 568h1v30h-1zM615 579h3v5h-3zM620 549h1v37h-1zM619 550h3v35h-3zM624 535h1v34h-1zM623 548h3v11h-3zM628 543h1v13h-1zM627 548h3v3h-3zM640 575h1v36h-1zM639 578h3v10h-3zM648 565h1v26h-1zM647 569h3v15h-3zM664 588h1v26h-1zM663 599h3v2h-3zM672 562h1v47h-1zM671 567h3v29h-3zM680 561h1v16h-1zM679 572h3v2h-3zM684 548h1v28h-1zM683 551h3v24h-3zM688 525h1v38h-1zM687 550h3v5h-3zM692 543h1v19h-1zM691 547h3v7h-3zM696 532h1v52h-1zM695 558h3v4h-3zM704 569h1v23h-1zM703 584h3v7h-3zM708 549h1v39h-1zM707 574h3v9h-3zM716 564h1v35h-1zM715 565h3v31h-3zM728 564h1v15h-1zM727 569h3v9h-3zM732 559h1v18h-1zM731 562h3v9h-3zM736 519h1v60h-1zM735 535h3v37h-3zM740 517h1v31h-1zM739 534h3v8h-3zM752 528h1v65h-1zM751 530h3v56h-3zM756 511h1v34h-1zM755 522h3v21h-3zM760 495h1v54h-1zM759 508h3v40h-3zM764 520h1v22h-1zM763 525h3v3h-3zM768 522h1v36h-1zM767 534h3v18h-3zM772 529h1v27h-1zM771 542h3v9h-3zM792 552h1v41h-1zM791 568h3v21h-3zM804 517h1v64h-1zM803 518h3v60h-3zM808 515h1v31h-1zM807 523h3v13h-3zM816 548h1v31h-1zM815 552h3v16h-3zM832 568h1v37h-1zM831 589h3v9h-3zM836 574h1v21h-1zM835 584h3v4h-3zM840 548h1v34h-1zM839 549h3v31h-3zM844 528h1v28h-1zM843 538h3v14h-3zM852 532h1v29h-1zM851 548h3v12h-3zM860 532h1v44h-1zM859 546h3v29h-3zM868 568h1v13h-1zM867 578h3v3h-3zM872 551h1v39h-1zM871 555h3v25h-3zM880 542h1v34h-1zM879 543h3v32h-3zM888 516h1v53h-1zM887 518h3v50h-3zM892 515h1v15h-1zM891 521h3v8h-3zM940 585h1v19h-1zM939 593h3v8h-3zM944 571h1v22h-1zM943 572h3v20h-3zM956 549h1v38h-1zM955 551h3v27h-3z"/><rect x="0" y="510" width="1036" height="1" fill="#5a86c8" opacity=".75"/><rect x="0" y="534" width="1036" height="1" fill="#5a86c8" opacity=".75"/><rect x="0" y="607" width="1036" height="1" fill="#5a86c8" opacity=".75"/><rect x="0" y="631" width="1036" height="1" fill="#5a86c8" opacity=".75"/><rect x="0" y="643" width="1036" height="1" fill="#6f8fc8" opacity=".6"/><rect x="1036" y="498" width="21" height="1" fill="#5a8cc4"/><rect x="1036" y="510" width="21" height="1" fill="#5a8cc4"/><rect x="1036" y="522" width="21" height="1" fill="#5a8cc4"/><rect x="1036" y="534" width="21" height="1" fill="#5a8cc4"/><rect x="1036" y="607" width="21" height="1" fill="#5a8cc4"/><rect x="1036" y="619" width="21" height="1" fill="#5a8cc4"/><rect x="1036" y="631" width="21" height="1" fill="#5a8cc4"/><rect x="1036" y="643" width="21" height="1" fill="#5a8cc4"/><rect x="0" y="563" width="1057" height="1" fill="#e6f032"/></g><path d="M0 563.5C7.5 563.4 36.7 563.5 45 563C53.3 562.5 48.2 560.7 50 560.5C51.8 560.3 54.0 561.6 56 562C58.0 562.4 59.7 563.2 62 563C64.3 562.8 67.8 561.2 70 560.6C72.2 560.0 71.7 559.6 75 559.5C78.3 559.4 86.5 559.8 90 560C93.5 560.2 94.3 560.6 96 560.5C97.7 560.4 98.5 559.6 100 559.5C101.5 559.4 103.0 559.4 105 560C107.0 560.6 109.5 562.2 112 563C114.5 563.8 117.3 564.7 120 565C122.7 565.3 124.0 564.1 128 564.6C132.0 565.1 139.8 567.8 144 568C148.2 568.2 149.4 566.3 153 565.6C156.6 564.9 160.9 565.6 165.5 563.7C170.1 561.8 175.5 555.5 180.5 554.4C185.5 553.3 190.9 556.1 195.5 557C200.1 557.9 204.7 558.9 208 560C211.3 561.1 212.2 562.5 215.5 563.7C218.8 565.0 224.2 567.5 228 567.5C231.8 567.5 234.7 564.0 238 563.7C241.3 563.5 244.8 565.9 248 566C251.2 566.1 254.8 565.1 257 564.5C259.2 563.9 259.1 563.6 261 562.5C262.9 561.4 265.8 559.4 268.5 558C271.2 556.6 273.9 554.3 277 554C280.1 553.7 283.7 555.2 287 556C290.3 556.8 293.4 558.5 297 559C300.6 559.5 304.5 559.0 308.5 559C312.5 559.0 317.2 559.6 321 558.7C324.8 557.8 327.7 555.1 331 553.7C334.3 552.4 336.8 551.1 341 550.6C345.2 550.1 351.8 551.8 356 550.6C360.2 549.5 363.5 545.1 366 543.7C368.5 542.4 368.5 542.3 371 542.5C373.5 542.7 378.2 544.8 381 545C383.8 545.2 386.2 543.9 388 543.5C389.8 543.1 389.5 542.2 391.5 542.5C393.5 542.8 397.1 543.8 400 545C402.9 546.2 406.2 549.0 409 550C411.8 551.0 413.8 551.0 416.5 551C419.2 551.0 422.1 549.7 425 550C427.9 550.3 431.5 552.3 434 552.7C436.5 553.1 437.9 553.0 440 552.5C442.1 552.0 443.3 550.6 446.5 550C449.7 549.4 454.8 548.7 459 548.7C463.2 548.7 467.8 549.5 471.5 550C475.2 550.5 477.3 551.7 481.5 552C485.7 552.3 491.9 552.3 496.5 552C501.1 551.7 505.8 550.0 509 550C512.2 550.0 513.8 551.5 516 552C518.2 552.5 519.5 551.9 522 553C524.5 554.1 528.1 556.6 531 558.7C533.9 560.8 536.4 563.7 539.5 565.6C542.6 567.5 546.2 568.8 549.5 570C552.8 571.2 556.4 572.0 559.5 573C562.6 574.0 565.1 575.7 568 576C570.9 576.3 573.8 575.6 577 575C580.2 574.4 583.7 573.5 587 572.5C590.3 571.5 593.8 570.1 597 568.7C600.2 567.3 603.5 565.5 606 564C608.5 562.5 609.3 561.7 612 560C614.7 558.3 619.1 555.6 622 553.7C624.9 551.8 627.4 550.1 629.5 548.7C631.6 547.4 632.4 546.0 634.5 545.6C636.6 545.2 639.0 545.9 642 546.5C645.0 547.1 649.1 547.8 652.5 549C655.9 550.2 659.4 552.4 662.5 553.7C665.6 555.0 667.7 556.1 671 557C674.3 557.9 678.9 558.9 682.5 559C686.1 559.1 689.2 557.5 692.5 557.5C695.8 557.5 698.8 558.6 702.5 558.7C706.2 558.8 710.8 558.0 715 558C719.2 558.0 724.2 559.2 727.5 558.7C730.8 558.2 732.5 556.6 735 555C737.5 553.4 739.6 550.0 742.5 549C745.4 548.0 749.6 549.5 752.5 548.7C755.4 547.9 757.1 545.3 760 544C762.9 542.7 767.4 541.8 770 541C772.6 540.2 773.2 538.8 775.5 539C777.8 539.2 780.1 541.7 784 542C787.9 542.3 794.8 541.1 799 540.6C803.2 540.1 805.4 539.0 809 538.7C812.6 538.4 817.3 538.0 820.5 539C823.7 540.0 825.5 542.8 828 545C830.5 547.2 833.0 550.5 835.5 552C838.0 553.5 840.1 554.2 843 554C845.9 553.8 849.8 552.3 853 551C856.2 549.7 859.1 546.7 862 546C864.9 545.3 867.4 546.4 870.5 547C873.6 547.6 877.6 549.3 880.5 549.5C883.4 549.7 885.4 549.0 888 548C890.6 547.0 893.2 544.5 896 543.7C898.8 542.9 902.5 543.0 905 543C907.5 543.0 908.9 543.0 911 544C913.1 545.0 914.8 546.9 917.5 548.7C920.2 550.5 924.4 553.0 927.5 555C930.6 557.0 933.1 559.5 936 561C938.9 562.5 941.6 563.2 945 564C948.4 564.8 954.6 565.7 956.5 566" fill="none" stroke="#e524e0" stroke-width="2.5" stroke-linejoin="round" stroke-linecap="round"/><path d="M0 564.5C5.0 564.4 20.0 564.2 30 564C40.0 563.8 52.5 563.7 60 563.5C67.5 563.3 68.3 562.8 75 562.7C81.7 562.6 90.5 562.7 100 562.7C109.5 562.7 115.3 562.7 132 562.7C148.7 562.8 179.3 563.0 200 563C220.7 563.0 244.6 563.5 256 563C267.4 562.5 262.2 560.8 268.5 560.3C274.8 559.8 284.1 560.0 293.5 560C302.9 560.0 316.7 560.4 325 560C333.3 559.6 337.3 558.3 343.5 557.5C349.7 556.7 355.8 555.8 362 555C368.2 554.2 375.2 553.3 381 552.5C386.8 551.7 391.8 550.6 396.5 550C401.2 549.4 402.8 549.0 409 548.7C415.2 548.4 425.7 548.3 434 548C442.3 547.7 450.7 546.9 459 547C467.3 547.1 475.2 548.0 484 548.5C492.8 549.0 505.2 549.8 512 550C518.8 550.2 520.3 549.8 524.5 550C528.7 550.2 532.8 550.3 537 551C541.2 551.7 545.3 553.0 549.5 554C553.7 555.0 557.8 556.0 562 557C566.2 558.0 570.3 559.0 574.5 560C578.7 561.0 582.8 562.2 587 563C591.2 563.8 595.3 564.4 599.5 565C603.7 565.6 607.8 566.2 612 566.5C616.2 566.8 620.3 567.1 624.5 567C628.7 566.9 632.3 566.4 637 565.6C641.7 564.8 646.8 563.3 652.5 562C658.2 560.7 664.8 559.1 671 558C677.2 556.9 683.7 556.3 690 555.6C696.3 554.9 702.8 554.0 709 553.7C715.2 553.4 721.3 553.8 727.5 554C733.7 554.2 739.2 555.0 746 555C752.8 555.0 761.2 554.4 768 553.7C774.8 553.0 780.8 551.6 787 550.6C793.2 549.6 799.7 548.6 805.5 547.5C811.3 546.4 816.8 544.8 822 544C827.2 543.2 830.3 543.1 837 543C843.7 542.9 854.8 543.1 862 543.5C869.2 543.9 874.8 545.3 880.5 545.6C886.2 545.9 890.9 545.2 896 545.3C901.1 545.4 905.3 545.4 911 546C916.7 546.6 922.4 547.7 930 548.7C937.6 549.7 952.1 551.5 956.5 552" fill="none" stroke="#000" stroke-width="2" stroke-linejoin="round" stroke-linecap="butt"/><rect x="523" y="565" width="3" height="3" fill="#fff"/><rect x="523" y="590" width="3" height="3" fill="#fff"/></svg>
<div class="a" style="left:0px;top:662px;width:1057px;height:1px;background:#d5dae4;"></div>
<div class="a" style="left:56px;top:662px;width:1px;height:4px;background:#d5dae4;"></div>
<div class="a" style="left:120px;top:662px;width:1px;height:4px;background:#d5dae4;"></div>
<div class="a" style="left:184px;top:662px;width:1px;height:4px;background:#d5dae4;"></div>
<div class="a" style="left:248px;top:662px;width:1px;height:4px;background:#d5dae4;"></div>
<div class="a" style="left:312px;top:662px;width:1px;height:4px;background:#d5dae4;"></div>
<div class="a" style="left:376px;top:662px;width:1px;height:4px;background:#d5dae4;"></div>
<div class="a" style="left:440px;top:662px;width:1px;height:4px;background:#d5dae4;"></div>
<div class="a" style="left:504px;top:662px;width:1px;height:4px;background:#d5dae4;"></div>
<div class="a" style="left:568px;top:662px;width:1px;height:4px;background:#d5dae4;"></div>
<div class="a" style="left:632px;top:662px;width:1px;height:4px;background:#d5dae4;"></div>
<div class="a" style="left:696px;top:662px;width:1px;height:4px;background:#d5dae4;"></div>
<div class="a" style="left:760px;top:662px;width:1px;height:4px;background:#d5dae4;"></div>
<div class="a" style="left:824px;top:662px;width:1px;height:4px;background:#d5dae4;"></div>
<div class="a" style="left:888px;top:662px;width:1px;height:4px;background:#d5dae4;"></div>
<div class="a" style="left:952px;top:662px;width:1px;height:4px;background:#d5dae4;"></div>
<div class="a" style="left:0px;top:682px;width:1057px;height:3px;background:#ffffff;"></div>
<div class="a" style="left:0px;top:685px;width:1057px;height:21px;background:#f0f0f0;"></div>
<div class="a" style="left:0px;top:685px;width:1057px;height:1px;background:#000;"></div>
<div class="a" style="left:89px;top:685px;width:84px;height:19px;background:#fff;border:1px solid #000;border-top:none;box-sizing:border-box"></div>
<div class="a" style="left:340px;top:94px;width:510px;height:397px;background:#f0f0f0;border:1px solid #5a5a5a;box-sizing:border-box;box-shadow:0 1px 7px rgba(0,0,0,.35)"></div>
<div class="a" style="left:341px;top:95px;width:508px;height:30px;background:#fff;"></div>
<div class="a" style="left:349px;top:133px;width:390px;height:347px;background:#fff;border:1px solid #828790;box-sizing:border-box"></div>
<div class="a" style="left:396px;top:135px;width:95px;height:18px;background:#0078d7;"></div>
<svg width="1057" height="706" style="left:0;top:0"><rect x="349.6" y="102.4" width="12.8" height="10" fill="#fbfdff" stroke="#3f6fb4" stroke-width="1.1"/><rect x="349.6" y="102.4" width="12.8" height="2" fill="#5a8fd6"/><path d="M352.4 105.6v5M351.2 106.8l1.2-1.3 1.2 1.3M351.2 109.4l1.2 1.3 1.2-1.3" stroke="#5f86b4" stroke-width=".8" fill="none"/><rect x="355.6" y="106.4" width="9.2" height="9" rx="1.3" fill="#f6d432" stroke="#b0921c" stroke-width="1"/><path d="M821 104l10 10M831 104l-10 10" stroke="#000" stroke-width="1.1"/><rect x="359.5" y="141.5" width="8" height="8" fill="#fff" stroke="#919191" stroke-width="1"/><path d="M361.5 145.5h4.2" stroke="#3a3a3a" stroke-width="1.2"/><path d="M369 145.5h6" stroke="#7a7a7a" stroke-width="1" stroke-dasharray="1 1"/><path d="M384.5 153v47" stroke="#7a7a7a" stroke-width="1" stroke-dasharray="1 1"/><path d="M385 163.5h11" stroke="#7a7a7a" stroke-width="1" stroke-dasharray="1 1"/><path d="M385 181.5h11" stroke="#7a7a7a" stroke-width="1" stroke-dasharray="1 1"/><path d="M385 199.5h11" stroke="#7a7a7a" stroke-width="1" stroke-dasharray="1 1"/><rect x="376.6" y="137.6" width="14.8" height="12.6" rx="1" fill="#f8fbff" stroke="#2743b8" stroke-width="1.2"/><rect x="376.6" y="137.6" width="14.8" height="3.4" fill="#2743c0"/><rect x="385" y="138.8" width="1" height="1" fill="#fff"/><rect x="387" y="138.8" width="1" height="1" fill="#fff"/><rect x="389" y="138.8" width="1" height="1" fill="#fff"/><path d="M379 148q1.4-5.4 3.4-5.2 1.6.4 2 3 .6 2.6 2 2.2 1.4-.6 2.4-5.4" stroke="#8a90d8" stroke-width="1.2" fill="none"/><rect x="398.5" y="155.5" width="13" height="13" rx="2" fill="#f2d84a" stroke="#b89a24" stroke-width="1"/><path d="M399.6 157.2h10.8" stroke="#fbf0a0" stroke-width="1.4"/><path d="M409.6 163.6l3.1 3.1-3.1 3.1-3.1-3.1z" fill="#f7e27a" stroke="#8a6a14" stroke-width="1"/><rect x="398.5" y="173.5" width="13" height="13" rx="2" fill="#f2d84a" stroke="#b89a24" stroke-width="1"/><path d="M399.6 175.2h10.8" stroke="#fbf0a0" stroke-width="1.4"/><rect x="398.5" y="191.5" width="13" height="13" rx="2" fill="#f2d84a" stroke="#b89a24" stroke-width="1"/><path d="M399.6 193.2h10.8" stroke="#fbf0a0" stroke-width="1.4"/></svg>
<div class="a" style="left:748px;top:134px;width:93px;height:21px;background:#cccccc;border:1px solid #bfbfbf;box-sizing:border-box"></div>
<div class="a" style="left:748px;top:162px;width:93px;height:21px;background:#cccccc;border:1px solid #bfbfbf;box-sizing:border-box"></div>
<div class="a" style="left:748px;top:458px;width:93px;height:21px;background:#e1e1e1;border:2px solid #0078d7;box-sizing:border-box"></div>
<span class="t" style="left:179.80px;top:79.64px;font-size:12px;line-height:12px;color:#4a4a4a;">A</span>
<span class="t" style="left:208.30px;top:79.64px;font-size:12px;line-height:12px;color:#333;">T</span>
<span class="t" style="left:159.20px;top:87.67px;font-size:7px;line-height:7px;color:#222;font-weight:700;">E</span>
<span class="t" style="left:10.30px;top:5.64px;font-size:12px;line-height:12px;color:#919191;letter-spacing:-0.351px;">403028: Pepperstone-Edge04 - [EURAUD,H4]</span>
<span class="t" style="left:14.80px;top:26.94px;font-size:12px;line-height:12px;color:#a2a2a2;letter-spacing:-0.433px;">File</span>
<span class="t" style="left:51.60px;top:26.94px;font-size:12px;line-height:12px;color:#a2a2a2;letter-spacing:-0.600px;">View</span>
<span class="t" style="left:93.60px;top:26.94px;font-size:12px;line-height:12px;color:#a2a2a2;letter-spacing:-0.120px;">Insert</span>
<span class="t" style="left:141.60px;top:26.94px;font-size:12px;line-height:12px;color:#a2a2a2;letter-spacing:-0.380px;">Charts</span>
<span class="t" style="left:193.30px;top:26.94px;font-size:12px;line-height:12px;color:#a2a2a2;letter-spacing:-0.350px;">Tools</span>
<span class="t" style="left:238.60px;top:26.94px;font-size:12px;line-height:12px;color:#a2a2a2;letter-spacing:-0.020px;">Window</span>
<span class="t" style="left:299.20px;top:26.94px;font-size:12px;line-height:12px;color:#a2a2a2;letter-spacing:0.467px;">Help</span>
<span class="t" style="left:244.60px;top:50.44px;font-size:12px;line-height:12px;color:#000;letter-spacing:-0.100px;">New Order</span>
<span class="t" style="left:418.80px;top:50.64px;font-size:12px;line-height:12px;color:#000;letter-spacing:0.060px;">AutoTrading</span>
<span class="t" style="left:268.80px;top:80.44px;font-size:10px;line-height:10px;color:#444;letter-spacing:0.200px;">M1</span>
<span class="t" style="left:296.80px;top:80.44px;font-size:10px;line-height:10px;color:#444;letter-spacing:-0.600px;">M5</span>
<span class="t" style="left:322.80px;top:80.44px;font-size:10px;line-height:10px;color:#444;letter-spacing:-0.400px;">M15</span>
<span class="t" style="left:350.40px;top:80.44px;font-size:10px;line-height:10px;color:#444;letter-spacing:-0.050px;">M30</span>
<span class="t" style="left:381.60px;top:80.44px;font-size:10px;line-height:10px;color:#444;letter-spacing:0.700px;">H1</span>
<span class="t" style="left:408.80px;top:80.44px;font-size:10px;line-height:10px;color:#444;letter-spacing:-0.200px;">H4</span>
<span class="t" style="left:437.50px;top:80.44px;font-size:10px;line-height:10px;color:#444;letter-spacing:0.700px;">D1</span>
<span class="t" style="left:466.00px;top:80.44px;font-size:10px;line-height:10px;color:#444;letter-spacing:-0.800px;">W1</span>
<span class="t" style="left:491.50px;top:80.44px;font-size:10px;line-height:10px;color:#444;letter-spacing:0.500px;">MN</span>
<span class="t" style="left:-2.50px;top:104.53px;font-size:10px;line-height:10px;color:#dfe3ea;letter-spacing:-0.562px;">EURAUD,H4</span>
<span class="t" style="left:-2.00px;top:482.54px;font-size:10px;line-height:10px;color:#dfe3ea;letter-spacing:-0.483px;word-spacing:1px;">Value Chart Deluxe Edition(240) 3.6135 -2.7295 -1.1039 1.3079</span>
<span class="t" style="left:-8.90px;top:666.53px;font-size:10px;line-height:10px;color:#dfe3ea;letter-spacing:-0.510px;word-spacing:0.8px;">13 Oct 2021</span>
<span class="t" style="left:55.10px;top:666.53px;font-size:10px;line-height:10px;color:#dfe3ea;letter-spacing:-0.364px;word-spacing:0.8px;">18 Oct 00:00</span>
<span class="t" style="left:119.60px;top:666.53px;font-size:10px;line-height:10px;color:#dfe3ea;letter-spacing:-0.455px;word-spacing:0.8px;">20 Oct 16:00</span>
<span class="t" style="left:183.60px;top:666.53px;font-size:10px;line-height:10px;color:#dfe3ea;letter-spacing:-0.455px;word-spacing:0.8px;">25 Oct 08:00</span>
<span class="t" style="left:247.60px;top:666.53px;font-size:10px;line-height:10px;color:#dfe3ea;letter-spacing:-0.455px;word-spacing:0.8px;">28 Oct 00:00</span>
<span class="t" style="left:311.10px;top:666.53px;font-size:10px;line-height:10px;color:#dfe3ea;letter-spacing:-0.320px;word-spacing:0.8px;">1 Nov 16:00</span>
<span class="t" style="left:375.60px;top:666.53px;font-size:10px;line-height:10px;color:#dfe3ea;letter-spacing:-0.420px;word-spacing:0.8px;">4 Nov 08:00</span>
<span class="t" style="left:439.60px;top:666.53px;font-size:10px;line-height:10px;color:#dfe3ea;letter-spacing:-0.420px;word-spacing:0.8px;">9 Nov 00:00</span>
<span class="t" style="left:503.10px;top:666.53px;font-size:10px;line-height:10px;color:#dfe3ea;letter-spacing:-0.282px;word-spacing:0.8px;">11 Nov 16:00</span>
<span class="t" style="left:567.10px;top:666.53px;font-size:10px;line-height:10px;color:#dfe3ea;letter-spacing:-0.282px;word-spacing:0.8px;">16 Nov 08:00</span>
<span class="t" style="left:631.10px;top:666.53px;font-size:10px;line-height:10px;color:#dfe3ea;letter-spacing:-0.282px;word-spacing:0.8px;">19 Nov 00:00</span>
<span class="t" style="left:695.60px;top:666.53px;font-size:10px;line-height:10px;color:#dfe3ea;letter-spacing:-0.373px;word-spacing:0.8px;">23 Nov 16:00</span>
<span class="t" style="left:759.60px;top:666.53px;font-size:10px;line-height:10px;color:#dfe3ea;letter-spacing:-0.373px;word-spacing:0.8px;">26 Nov 08:00</span>
<span class="t" style="left:823.10px;top:666.53px;font-size:10px;line-height:10px;color:#dfe3ea;letter-spacing:-0.530px;word-spacing:0.8px;">1 Dec 00:00</span>
<span class="t" style="left:887.60px;top:666.53px;font-size:10px;line-height:10px;color:#dfe3ea;letter-spacing:-0.630px;word-spacing:0.8px;">3 Dec 16:00</span>
<span class="t" style="left:951.60px;top:666.53px;font-size:10px;line-height:10px;color:#dfe3ea;letter-spacing:-0.630px;word-spacing:0.8px;">8 Dec 08:00</span>
<span class="t" style="left:5.60px;top:689.47px;font-size:11.5px;line-height:11.5px;color:#7a7a7a;letter-spacing:-0.360px;">GBPAUD.a,H4</span>
<span class="t" style="left:98.50px;top:689.47px;font-size:11.5px;line-height:11.5px;color:#000;letter-spacing:-0.312px;">EURAUD,H4</span>
<span class="t" style="left:370.00px;top:104.14px;font-size:12px;line-height:12px;color:#000;letter-spacing:-0.227px;">Indicators on EURAUD,H4</span>
<span class="t" style="left:777.20px;top:103.20px;font-size:13px;line-height:13px;color:#000;font-weight:700;">?</span>
<span class="t" style="left:397.00px;top:138.69px;font-size:11px;line-height:11px;color:#fff;letter-spacing:0.059px;">Indicator window 1</span>
<span class="t" style="left:418.50px;top:156.69px;font-size:11px;line-height:11px;color:#000;letter-spacing:-0.109px;">Value_Chart_Deluxe_Edition_v1_0_2</span>
<span class="t" style="left:417.50px;top:174.69px;font-size:11px;line-height:11px;color:#000;letter-spacing:0.038px;">Moving Average</span>
<span class="t" style="left:417.50px;top:192.69px;font-size:11px;line-height:11px;color:#000;letter-spacing:0.038px;">Moving Average</span>
<span class="t" style="left:358.60px;top:106.18px;font-size:9px;line-height:9px;color:#7a4a00;font-weight:700;font-style:italic;font-family:'Liberation Serif',serif;">f</span>
<span class="t" style="left:402.40px;top:156.89px;font-size:11px;line-height:11px;color:#7a5200;font-weight:700;font-style:italic;font-family:'Liberation Serif',serif;">f</span>
<span class="t" style="left:402.40px;top:174.89px;font-size:11px;line-height:11px;color:#7a5200;font-weight:700;font-style:italic;font-family:'Liberation Serif',serif;">f</span>
<span class="t" style="left:402.40px;top:192.89px;font-size:11px;line-height:11px;color:#7a5200;font-weight:700;font-style:italic;font-family:'Liberation Serif',serif;">f</span>
<span class="t" style="left:783.00px;top:139.69px;font-size:11px;line-height:11px;color:#838383;letter-spacing:0.167px;">Edit</span>
<span class="t" style="left:777.00px;top:167.69px;font-size:11px;line-height:11px;color:#838383;">Delete</span>
<span class="t" style="left:780.50px;top:463.69px;font-size:11px;line-height:11px;color:#000;letter-spacing:-0.500px;">Close</span>
</body></html>
